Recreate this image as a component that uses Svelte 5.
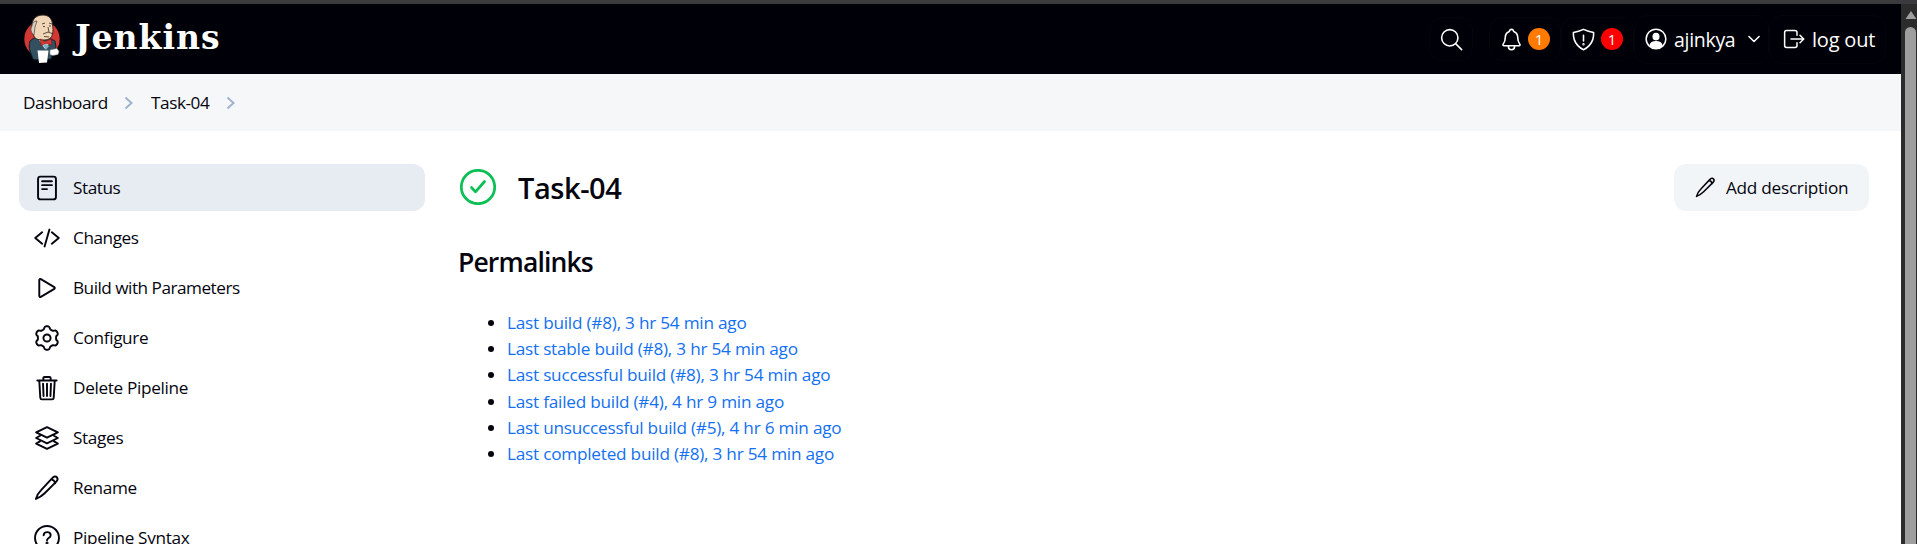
<script>
  const items = [
    { label: 'Status', icon: 'status' },
    { label: 'Changes', icon: 'code' },
    { label: 'Build with Parameters', icon: 'play' },
    { label: 'Configure', icon: 'gear' },
    { label: 'Delete Pipeline', icon: 'trash' },
    { label: 'Stages', icon: 'layers' },
    { label: 'Rename', icon: 'pencil' },
    { label: 'Pipeline Syntax', icon: 'help' }
  ];
  const links = [
    'Last build (#8), 3 hr 54 min ago',
    'Last stable build (#8), 3 hr 54 min ago',
    'Last successful build (#8), 3 hr 54 min ago',
    'Last failed build (#4), 4 hr 9 min ago',
    'Last unsuccessful build (#5), 4 hr 6 min ago',
    'Last completed build (#8), 3 hr 54 min ago'
  ];

  // Outline of a six-toothed gear with softly rounded teeth.
  const gearPoints = Array.from({ length: 120 }, (_, i) => {
    const a = (i / 120) * Math.PI * 2;
    const r = 205 + 27 * Math.tanh(2 * Math.cos(6 * a));
    return `${(256 + r * Math.sin(a)).toFixed(1)},${(256 - r * Math.cos(a)).toFixed(1)}`;
  }).join(' ');
</script>

{#snippet icon(name)}
  <svg class="icon" viewBox="0 0 512 512" aria-hidden="true">
    {#if name === 'status'}
      <rect x="80" y="32" width="352" height="448" rx="48" />
      <path d="M160 122h192M160 200h192M160 278h96" />
    {:else if name === 'code'}
      <path d="M160 368L24 256l136-112M352 368l136-112-136-112M304 90l-96 332" />
    {:else if name === 'play'}
      <path d="M104 101v310c0 17 17 28 31 20l265-158c12-7 12-27 0-34L135 81c-14-8-31 3-31 20z" />
    {:else if name === 'gear'}
      <circle cx="256" cy="256" r="70" />
      <polygon points={gearPoints} />
    {:else if name === 'trash'}
      <path d="M104 108l20 340c1 18 14 32 32 32h200c18 0 31-14 32-32l20-340M66 108h380M184 108V62a24 24 0 0124-24h96a24 24 0 0124 24v46M256 172v240M178 172l10 240M334 172l-10 240" />
    {:else if name === 'layers'}
      <path d="M256 42L470 146 256 250 42 146zM118 212L42 256l214 104 214-104-76-44M118 322L42 366l214 104 214-104-76-44" />
    {:else if name === 'pencil'}
      <path d="M364 58c30-36 68-36 88-10s16 54-12 82L210 360c-40 40-82 76-172 112 22-92 70-142 106-178zM336 86q66 6 82 78" />
    {:else if name === 'help'}
      <circle cx="256" cy="256" r="236" />
      <path d="M190 202c4-46 34-62 68-62 40 0 70 24 70 60 0 56-72 54-72 100" />
      <circle class="fill" cx="256" cy="352" r="10" />
    {:else if name === 'search'}
      <circle cx="221" cy="221" r="167" /><path d="M345 345l118 118" />
    {:else if name === 'bell'}
      <path d="M427.68 351.43C402 320 383.87 304 383.87 217.35 383.87 138 343.35 109.73 310 96c-4.43-1.82-8.6-6-9.95-10.55C294.2 65.54 277.8 48 256 48s-38.21 17.55-44 37.47c-1.35 4.6-5.52 8.71-9.95 10.53-33.39 13.75-73.87 41.92-73.87 121.35C128.13 304 110 320 84.32 351.43 73.68 364.45 83 384 101.61 384h308.88c18.51 0 27.77-19.61 17.19-32.57zM320 384v16a64 64 0 01-128 0v-16" />
    {:else if name === 'shield'}
      <path d="M463.1 112.37C373.68 96.33 336.71 84.45 256 48c-80.71 36.45-117.68 48.33-207.1 64.37C32.7 369.13 240.58 457.79 256 464c15.42-6.21 223.3-94.87 207.1-351.63zM256 170v118" />
      <circle class="fill" cx="256" cy="354" r="8" />
    {:else if name === 'person'}
      <circle cx="256" cy="256" r="210" />
      <ellipse class="fill" cx="256" cy="204" rx="60" ry="66" />
      <path class="fill" d="M130 390c18-60 78-76 126-76s108 16 126 76c-68 82-184 82-252 0z" />
    {:else if name === 'chevron'}
      <path d="M112 184l144 144 144-144" />
    {:else if name === 'logout'}
      <path d="M320 336v60a40 40 0 01-40 40H96a40 40 0 01-40-40V116a40 40 0 0140-40h176c22 0 48 18 48 40v60M384 336l80-80-80-80M192 256h262" />
    {/if}
  </svg>
{/snippet}

<div class="page">
  <div class="window-edge"></div>
  <div class="body">
    <div class="view">
      <header>
        <a class="brand" href="#home">
          <svg class="butler" viewBox="0 0 36 50" aria-hidden="true">
            <ellipse cx="18" cy="25" rx="17.7" ry="18" fill="#d33833" />
            <path d="M10 24l-4 3c-1 3-1 7 0 10l3 8c2 1 5 1 7 0h11l2-6 3-6-1-6-6-3z" fill="#335061" stroke="#151f28" stroke-width="1" />
            <path d="M11 24C8 19 7 15 8 10 9 4 13 1 19 1c6 0 9 4 9.500 9 .5 4 .8 7 0 10-1 4-4 6-8 6-4 0-7 0-9.500-2z" fill="#f0d6b7" stroke="#32251f" stroke-width="1" />
            <path d="M8 12c-2 3-1 7 2 9l1-8 2-6c-3 0-5 2-5 5z" fill="#d8d0c0" stroke="#49423c" stroke-width=".7" />
            <path d="M18 10l3-1M25 9l3 1M19 12.500h2M25 12h2M24 13l1 5M19 20l5-2 4 1.500M20 22.500l5 .5" fill="none" stroke="#4b3b32" stroke-width=".9" />
            <path d="M15 26l6 9 6-8-6 1z" fill="#f7f7f4" />
            <path d="M16 25l5 2.500 6-2.500 1 6-6-1.500-5 2z" fill="#d33833" stroke="#7b1715" stroke-width=".6" />
            <path d="M19 31l3-1 3 2-3 4z" fill="#81b0c4" />
            <path d="M13.500 36.500h11l-1.500 12-8 .5z" fill="#fff" />
            <path d="M26 36l7-1.500 2 3-1 3-5 1-3-1z" fill="#fff" stroke="#888" stroke-width=".5" />
          </svg>
          <span class="brand-name">Jenkins</span>
        </a>
        <nav class="tools">
          <button class="tool search">{@render icon('search')}</button>
          <button class="tool bell">{@render icon('bell')}<span class="badge orange">1</span></button>
          <button class="tool shield">{@render icon('shield')}<span class="badge red">1</span></button>
          <button class="tool user">{@render icon('person')}<span class="uname">ajinkya</span><span class="chev">{@render icon('chevron')}</span></button>
          <button class="tool logout">{@render icon('logout')}<span class="out">log out</span></button>
        </nav>
      </header>

      <div class="crumbs">
        <span class="c1">Dashboard</span>
        <svg viewBox="0 0 10 14"><path d="M1.5 1.5L7.5 7l-6 5.5" /></svg>
        <span class="c2">Task-04</span>
        <svg viewBox="0 0 10 14"><path d="M1.5 1.5L7.5 7l-6 5.5" /></svg>
      </div>

      <div class="columns">
        <aside>
          {#each items as item, i}
            <a href="#{item.icon}" class="task" class:active={i === 0}>
              {@render icon(item.icon)}<span>{item.label}</span>
            </a>
          {/each}
        </aside>
        <main>
          <div class="title-row">
            <svg class="ok" viewBox="0 0 36 36" aria-hidden="true">
              <circle cx="18" cy="18" r="16.7" /><path d="M11.500 18.500l4 4.300 9-10.300" />
            </svg>
            <h1>Task-04</h1>
            <button class="describe">{@render icon('pencil')}<span>Add description</span></button>
          </div>
          <h2>Permalinks</h2>
          <ul>
            {#each links as link}
              <li><a href="#build">{link}</a></li>
            {/each}
          </ul>
        </main>
      </div>
    </div>
    <div class="scrollbar">
      <svg viewBox="0 0 12 10"><path d="M6 1L11.5 9H.5z" stroke-linejoin="round" /></svg>
      <div class="thumb"></div>
    </div>
  </div>
</div>

<style>
  :global(body) { background: #fff; overflow: hidden; }
  .page {
    height: 544px;
    overflow: hidden;
    display: flex;
    flex-direction: column;
    font: 17.2px/26px "Open Sans", "Noto Sans", sans-serif;
    letter-spacing: -0.44px;
    color: #05050f;
    white-space: nowrap;
  }
  .page * { box-sizing: border-box; }
  a { color: inherit; text-decoration: none; }
  button { font: inherit; letter-spacing: inherit; color: inherit; border: 0; background: none; padding: 0; }
  .icon { width: 26px; height: 26px; flex: none; fill: none; stroke: currentColor; stroke-width: 38; stroke-linecap: round; stroke-linejoin: round; }
  .fill { fill: currentColor; }
  .window-edge { height: 4px; background: #3b3b3e; flex: none; }
  .body { display: flex; flex: 1; min-height: 0; }
  .view { flex: 1; min-width: 0; overflow: hidden; }
  header { height: 70px; background: #000009; color: #fff; display: flex; justify-content: space-between; padding-right: 15px; }
  .brand { display: flex; align-items: flex-start; padding: 10px 0 0 24px; }
  .butler { width: 36px; height: 50px; }
  .brand-name { font: bold 33px/40px "DejaVu Serif", serif; letter-spacing: 1px; margin: 4px 0 0 15px; }
  .tools { display: flex; align-items: center; }
  .tool { height: 44px; border-radius: 13px; border: 1px solid #05050e; display: flex; align-items: center; }
  .tool .icon { width: 25px; height: 25px; stroke-width: 32; }
  .search { width: 44px; justify-content: center; margin-right: 16px; }
  .bell { width: 72px; padding-left: 9px; }
  .shield { width: 73px; padding-left: 9px; }
  .badge { width: 22px; height: 22px; border-radius: 50%; font-size: 15px; line-height: 22px; text-align: center; margin-left: 4px; letter-spacing: 0; }
  .orange { background: #ff7a00; }
  .red { background: #f00; margin-left: 5px; }
  .user { width: 135px; height: 49px; padding-left: 9px; font-size: 19.5px; letter-spacing: -0.3px; }
  .user > .icon { width: 24px; height: 24px; }
  .uname { width: 61px; margin-left: 6px; padding-top: 2px; }
  .chev { margin-left: 10px; display: flex; }
  .chev .icon { width: 18px; height: 18px; stroke-width: 44; }
  .logout { width: 117px; height: 49px; padding-left: 12px; font-size: 20px; letter-spacing: -0.2px; }
  .logout .icon { width: 24px; height: 24px; }
  .out { margin-left: 6px; padding-top: 2px; }
  .crumbs { height: 57px; background: #f6f7f9; display: flex; align-items: center; padding-left: 23px; }
  .crumbs svg { width: 10px; height: 14px; fill: none; stroke: #9fb3cf; stroke-width: 2; }
  .c1 { width: 84px; margin-right: 17px; }
  .c2 { width: 58px; margin: 0 17px 0 17px; }
  .columns { display: flex; padding: 33px 32px 0 19px; }
  aside { width: 406px; display: flex; flex-direction: column; gap: 3px; flex: none; }
  .task { height: 47px; border-radius: 12px; display: flex; align-items: center; padding-left: 15px; gap: 13px; }
  .task:nth-child(3) { letter-spacing: -0.5px; }
  .task:nth-child(n + 4) { letter-spacing: -0.34px; }
  .active { background: #e7ebf2; }
  main { flex: 1; margin-left: 33px; }
  .title-row { height: 47px; display: flex; align-items: center; padding-left: 2px; }
  .ok { width: 36px; height: 36px; margin-top: -2px; fill: none; stroke: #0abf53; stroke-width: 2.7; stroke-linecap: round; stroke-linejoin: round; }
  h1 { font-size: 29px; font-weight: 600; line-height: 40px; letter-spacing: -0.45px; margin: 0 0 0 22px; }
  .describe { height: 47px; width: 195px; margin-left: auto; background: #f2f5f8; border-radius: 12px; display: flex; align-items: center; padding-left: 21px; gap: 10px; letter-spacing: -0.26px; }
  .describe .icon { width: 21px; height: 21px; }
  h2 { font-size: 26.5px; font-weight: 600; line-height: 36px; letter-spacing: -0.85px; margin: 33px 0 0; }
  ul { margin: 29px 0 0; padding: 0 0 0 49px; }
  li { height: 26.2px; line-height: 26.2px; letter-spacing: -0.23px; }
  li::marker { font-size: 18px; }
  li a { color: #1370f0; }
  .scrollbar { width: 16px; background: #2c2c2c; padding: 6px 1px 0 4px; display: flex; flex-direction: column; align-items: center; flex: none; }
  .scrollbar svg { width: 12px; height: 10px; fill: #9f9f9f; }
  .thumb { width: 11px; flex: 1; margin-top: 7px; background: #9f9f9f; border-radius: 6px 6px 0 0; }
</style>
